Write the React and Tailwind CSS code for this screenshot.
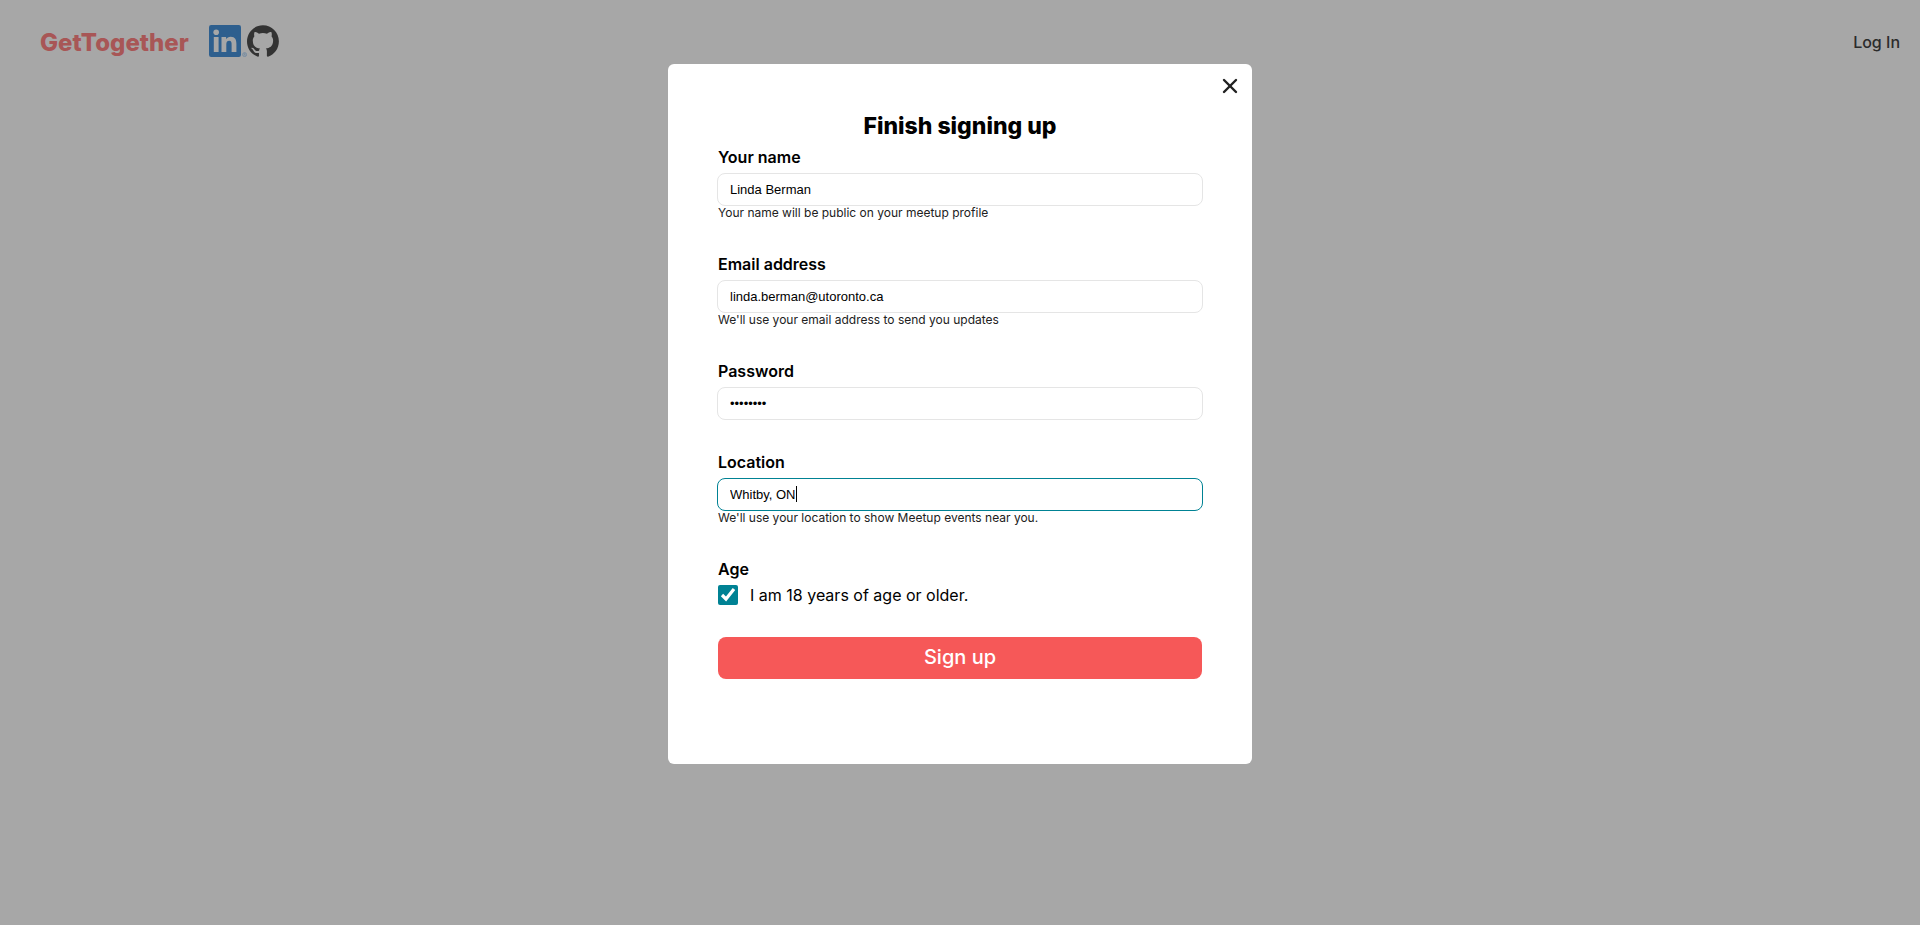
import { useEffect, useRef } from "react";
import { X } from "lucide-react";

const inputClass =
  "block h-[33px] w-full rounded-lg border border-[#e5e5e5] bg-white px-3 font-['Liberation_Sans',Arial,sans-serif] text-[13px] text-black caret-transparent outline-none focus:border-[#008294]";

function Field({ id, label, hint, type = "text", defaultValue, inputRef, children }) {
  return (
    <div>
      <label htmlFor={id} className="mb-1.5 block px-px text-base/5 font-semibold">
        {label}
      </label>
      <div className="relative">
        <input id={id} type={type} defaultValue={defaultValue} ref={inputRef} className={inputClass} />
        {children}
      </div>
      {hint && <p className="px-px pb-0.5 text-xs/[14px] text-[#212121]">{hint}</p>}
    </div>
  );
}

function LinkedInLogo() {
  return (
    <svg viewBox="0 0 38 32" className="h-8 w-[38px]" aria-hidden="true">
      <rect width="32" height="32" rx="2.2" fill="#2e5f8e" />
      <g fill="#a7a7a7">
        <circle cx="7.2" cy="7.2" r="2.8" />
        <path d="M4.8 12.1h4.8v15H4.8zM12.5 12.1h4.6v2.1c.8-1.5 2.5-2.5 4.6-2.5 4.5 0 5.7 2.9 5.7 7.1v8.3h-4.8v-7.6c0-1.9-.2-3.7-2.4-3.7s-2.9 1.7-2.9 3.7v7.6h-4.8z" />
      </g>
      <circle cx="35.6" cy="29.6" r="2" fill="none" stroke="#5d7d9f" strokeWidth="0.6" />
      <path d="M35 30.7v-2.1h.8a.5.5 0 010 1.1h-.8m.8 0l.6 1" fill="none" stroke="#5d7d9f" strokeWidth="0.4" />
    </svg>
  );
}

function GitHubLogo() {
  return (
    <svg viewBox="0 0 98 96" className="size-8" fill="#333333" aria-hidden="true">
      <path
        fillRule="evenodd"
        clipRule="evenodd"
        d="M48.854 0C21.839 0 0 22 0 49.217c0 21.756 13.993 40.172 33.405 46.69 2.427.49 3.316-1.059 3.316-2.362 0-1.141-.08-5.052-.08-9.127-13.59 2.934-16.42-5.867-16.42-5.867-2.184-5.704-5.42-7.17-5.42-7.17-4.448-3.015.324-3.015.324-3.015 4.934.326 7.523 5.052 7.523 5.052 4.367 7.496 11.404 5.378 14.235 4.074.404-3.178 1.699-5.378 3.074-6.6-10.839-1.141-22.243-5.378-22.243-24.283 0-5.378 1.94-9.778 5.014-13.2-.485-1.222-2.184-6.275.486-13.038 0 0 4.125-1.304 13.426 5.052a46.97 46.97 0 0 1 12.214-1.63c4.125 0 8.33.571 12.213 1.63 9.302-6.356 13.427-5.052 13.427-5.052 2.67 6.763.97 11.816.485 13.038 3.155 3.422 5.015 7.822 5.015 13.2 0 18.905-11.404 23.06-22.324 24.283 1.78 1.548 3.316 4.481 3.316 9.126 0 6.6-.08 11.897-.08 13.526 0 1.304.89 2.853 3.316 2.364 19.412-6.52 33.405-24.935 33.405-46.691C97.707 22 75.788 0 48.854 0z"
      />
    </svg>
  );
}

export default function App() {
  const locationRef = useRef(null);

  useEffect(() => {
    const el = locationRef.current;
    el.focus();
    el.setSelectionRange(el.value.length, el.value.length);
  }, []);

  return (
    <div className="grid min-h-screen bg-[#a7a7a7] font-['Inter',sans-serif] text-black">
      <header className="col-start-1 row-start-1 flex h-[82px] items-center justify-between pr-5 pl-10">
        <div className="flex items-center">
          <a href="#home" className="mr-5 pt-1 text-2xl font-extrabold text-[#a85656]">
            GetTogether
          </a>
          <a href="#linkedin" aria-label="LinkedIn">
            <LinkedInLogo />
          </a>
          <a href="#github" aria-label="GitHub">
            <GitHubLogo />
          </a>
        </div>
        <a href="#login" className="pt-0.5 text-base font-medium text-[#2b2b2b]">
          Log In
        </a>
      </header>

      <div
        role="dialog"
        aria-modal="true"
        aria-labelledby="signup-title"
        className="relative col-start-1 row-start-1 mt-16 w-full max-w-[584px] self-start justify-self-center rounded-md bg-white px-[49px] pt-[46px] pb-[85px]"
      >
        <button type="button" aria-label="Close" className="absolute top-2.5 right-2.5 text-[#212121]">
          <X size={24} strokeWidth={2.4} />
        </button>
        <h1 id="signup-title" className="mb-[5px] text-center text-[23px]/8 font-extrabold">
          Finish signing up
        </h1>
        <form className="flex flex-col gap-8" onSubmit={(e) => e.preventDefault()}>
          <Field id="name" label="Your name" defaultValue="Linda Berman" hint="Your name will be public on your meetup profile" />
          <Field
            id="email"
            type="email"
            label="Email address"
            defaultValue="linda.berman@utoronto.ca"
            hint="We'll use your email address to send you updates"
          />
          <Field id="password" type="password" label="Password" defaultValue="password" />
          <Field
            id="location"
            label="Location"
            defaultValue="Whitby, ON"
            hint="We'll use your location to show Meetup events near you."
            inputRef={locationRef}
          >
            <span aria-hidden="true" className="absolute top-2 left-[79px] h-4 w-px bg-black" />
          </Field>
          <fieldset className="px-px">
            <legend className="mb-1.5 text-base/5 font-semibold">Age</legend>
            <div className="flex items-center gap-3">
              <input id="age" type="checkbox" defaultChecked className="size-5 accent-[#008294]" />
              <label htmlFor="age" className="text-base/5">
                I am 18 years of age or older.
              </label>
            </div>
          </fieldset>
          <button type="submit" className="mx-px h-[42px] rounded-lg bg-[#f65858] pb-0.5 text-xl font-medium text-white">
            Sign up
          </button>
        </form>
      </div>
    </div>
  );
}
